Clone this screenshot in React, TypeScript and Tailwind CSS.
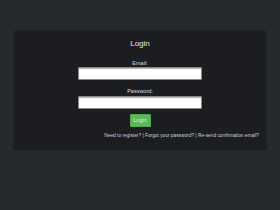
export default function App() {
	return (
		<div className="min-h-[210px] w-full bg-[#26292e] px-[14px] pt-[31px] font-['Liberation_Sans',Arial,sans-serif]">
			<div className="flex h-[119px] flex-col items-center rounded-[2px] bg-[#1c1d21] pt-[7px] shadow-[0_0_2px_rgba(0,0,0,0.4)]">
				<h1 className="h-[12px] text-[8px] leading-[12px] text-[#e6e6e6]">Login</h1>
				<label className="mt-[10px] h-[6px] text-[5.5px] leading-[6px] text-[#dddddd]">Email:</label>
				<input className="mt-[1px] h-[13px] w-[124px] rounded-[1px] border border-[#888] bg-white shadow-[inset_0_1px_1px_rgba(0,0,0,0.3)] outline-none" />
				<label className="mt-[8px] h-[6px] text-[5.5px] leading-[6px] text-[#dddddd]">Password:</label>
				<input type="password" className="mt-[2px] h-[13px] w-[124px] rounded-[1px] border border-[#888] bg-white shadow-[inset_0_1px_1px_rgba(0,0,0,0.3)] outline-none" />
				<button className="mt-[5px] h-[13px] w-[21px] rounded-[1px] border border-[#4cae4c] bg-[#5cb85c] text-[5.5px] leading-[11px] text-[#d8f0d8]">
					Login
				</button>
				<p className="mt-[6px] w-full pr-[7px] text-right text-[4.8px] leading-[6px] text-[#d0d0d0]">
					Need to register? | Forgot your password? | Re-send confirmation email?
				</p>
			</div>
		</div>
	);
}
